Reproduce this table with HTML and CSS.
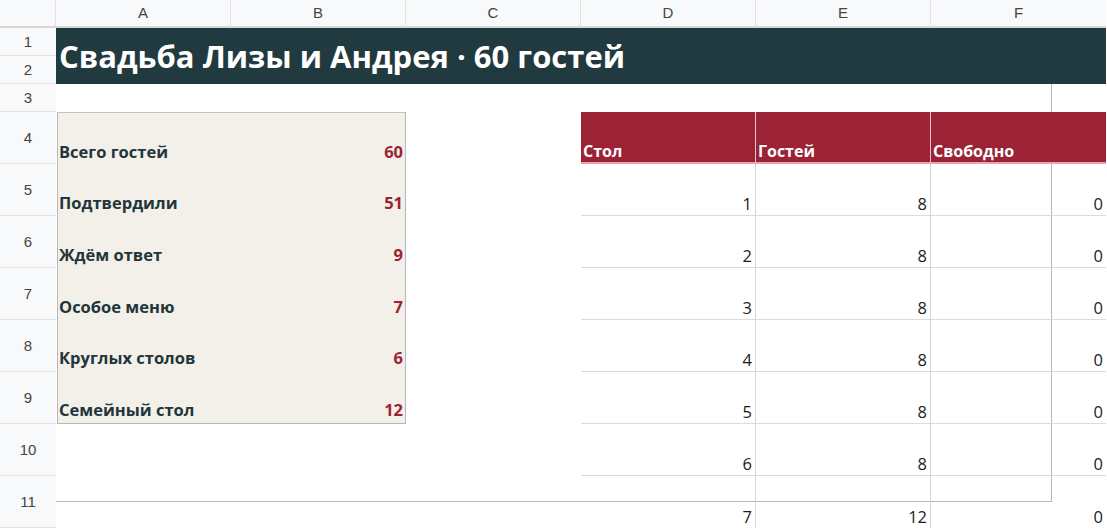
FILE: index.html
```html
<!DOCTYPE html>
<html lang="ru">
<head>
<meta charset="utf-8">
<title>Свадьба Лизы и Андрея</title>
<link rel="stylesheet" href="styles.css">
</head>
<body>
<div class="sheet">
  <div class="frame-line"></div>

  <div class="corner"></div>
  <div class="colhead c-a">A</div>
  <div class="colhead c-b">B</div>
  <div class="colhead c-c">C</div>
  <div class="colhead c-d">D</div>
  <div class="colhead c-e">E</div>
  <div class="colhead c-f">F</div>

  <div class="rowhead r1">1</div>
  <div class="rowhead r2">2</div>
  <div class="rowhead r3">3</div>
  <div class="rowhead r4">4</div>
  <div class="rowhead r5">5</div>
  <div class="rowhead r6">6</div>
  <div class="rowhead r7">7</div>
  <div class="rowhead r8">8</div>
  <div class="rowhead r9">9</div>
  <div class="rowhead r10">10</div>
  <div class="rowhead r11">11</div>

  <div class="title">Свадьба Лизы и Андрея · 60 гостей</div>

  <div class="summary">
    <div class="s-label">Всего гостей</div><div class="s-value">60</div>
    <div class="s-label">Подтвердили</div><div class="s-value">51</div>
    <div class="s-label">Ждём ответ</div><div class="s-value">9</div>
    <div class="s-label">Особое меню</div><div class="s-value">7</div>
    <div class="s-label">Круглых столов</div><div class="s-value">6</div>
    <div class="s-label">Семейный стол</div><div class="s-value">12</div>
  </div>

  <div class="tables">
    <div class="t-head sep">Стол</div>
    <div class="t-head sep">Гостей</div>
    <div class="t-head">Свободно</div>

    <div class="t-cell sep line">1</div><div class="t-cell sep line">8</div><div class="t-cell line">0</div>
    <div class="t-cell sep line">2</div><div class="t-cell sep line">8</div><div class="t-cell line">0</div>
    <div class="t-cell sep line">3</div><div class="t-cell sep line">8</div><div class="t-cell line">0</div>
    <div class="t-cell sep line">4</div><div class="t-cell sep line">8</div><div class="t-cell line">0</div>
    <div class="t-cell sep line">5</div><div class="t-cell sep line">8</div><div class="t-cell line">0</div>
    <div class="t-cell sep line">6</div><div class="t-cell sep line">8</div><div class="t-cell line">0</div>
    <div class="t-cell sep">7</div><div class="t-cell sep">12</div><div class="t-cell">0</div>
  </div>
</div>
</body>
</html>
```
FILE: styles.css
```css
html {
  background: #ffffff;
}

html, body {
  margin: 0;
  padding: 0;
}

.sheet {
  position: relative;
  display: grid;
  grid-template-columns: 56px repeat(6, 175px);
  grid-template-rows: 28px 28px 28px 28px repeat(8, 52px) 3px;
  width: 1107px;
  height: 531px;
  overflow: hidden;
  font-family: "Open Sans", "Noto Sans", sans-serif;
}

.frame-line {
  position: absolute;
  left: 56px;
  top: 84px;
  width: 995px;
  height: 417px;
  border-right: 1px solid #b9b9b9;
  border-bottom: 1px solid #b9b9b9;
  z-index: -1;
}

.corner {
  grid-row: 1;
  grid-column: 1;
  background: #f8f9fa;
  border-right: 1px solid #e2e2e2;
  border-bottom: 2px solid #d6d6d6;
}

.colhead {
  grid-row: 1;
  background: #f8f9fa;
  border-right: 1px solid #e2e2e2;
  border-bottom: 2px solid #d6d6d6;
  display: flex;
  align-items: center;
  justify-content: center;
  font-family: "Liberation Sans", Arial, sans-serif;
  font-size: 15px;
  color: #444444;
  padding-bottom: 1px;
}

.c-a { grid-column: 2; }
.c-b { grid-column: 3; }
.c-c { grid-column: 4; }
.c-d { grid-column: 5; }
.c-e { grid-column: 6; }
.c-f { grid-column: 7; border-right: none; }

.rowhead {
  grid-column: 1;
  background: #f8f9fa;
  border-bottom: 1px solid #e2e2e2;
  display: flex;
  align-items: center;
  justify-content: center;
  font-family: "Liberation Sans", Arial, sans-serif;
  font-size: 15px;
  color: #444444;
}

.r1 { grid-row: 2; }
.r2 { grid-row: 3; }
.r3 { grid-row: 4; }
.r4 { grid-row: 5; }
.r5 { grid-row: 6; }
.r6 { grid-row: 7; }
.r7 { grid-row: 8; }
.r8 { grid-row: 9; }
.r9 { grid-row: 10; }
.r10 { grid-row: 11; }
.r11 { grid-row: 12; }

.title {
  grid-column: 2 / 8;
  grid-row: 2 / 4;
  background: #213a40;
  color: #ffffff;
  font-weight: 700;
  font-size: 31px;
  display: flex;
  align-items: center;
  padding-left: 3px;
  white-space: nowrap;
}

.summary {
  grid-column: 2 / 4;
  grid-row: 5 / 11;
  margin-left: 1px;
  display: grid;
  grid-template-columns: 1fr auto;
  grid-template-rows: repeat(6, 1fr);
  background: #f2f0e9;
  border: 1px solid #b7b7b7;
  border-top-color: #c2c2c2;
}

.s-label,
.s-value {
  display: flex;
  align-items: flex-end;
  padding-bottom: 2px;
  font-size: 16.5px;
  font-weight: 700;
  line-height: 22px;
}

.s-label {
  color: #21353a;
  padding-left: 1px;
}

.s-value {
  color: #9b2335;
  justify-content: flex-end;
  padding-right: 2px;
}

.tables {
  grid-column: 5 / 8;
  grid-row: 5 / 13;
  display: grid;
  grid-template-columns: repeat(3, 175px);
  grid-template-rows: repeat(8, 52px);
}

.t-head {
  background: #9b2335;
  color: #ffffff;
  font-size: 16px;
  font-weight: 700;
  line-height: 22px;
  display: flex;
  align-items: flex-end;
  padding: 0 0 0 2px;
  border-bottom: 2px solid #e4a7b0;
}

.t-head.sep {
  border-right: 1px solid #e9c3c8;
}

.t-cell {
  font-size: 16.5px;
  line-height: 22px;
  color: #1c1c1c;
  display: flex;
  align-items: flex-end;
  justify-content: flex-end;
  padding: 0 3px 0 0;
}

.t-cell.sep {
  border-right: 1px solid #d6d6d6;
}

.t-cell.line {
  border-bottom: 1px solid #dcdcdc;
}
```
